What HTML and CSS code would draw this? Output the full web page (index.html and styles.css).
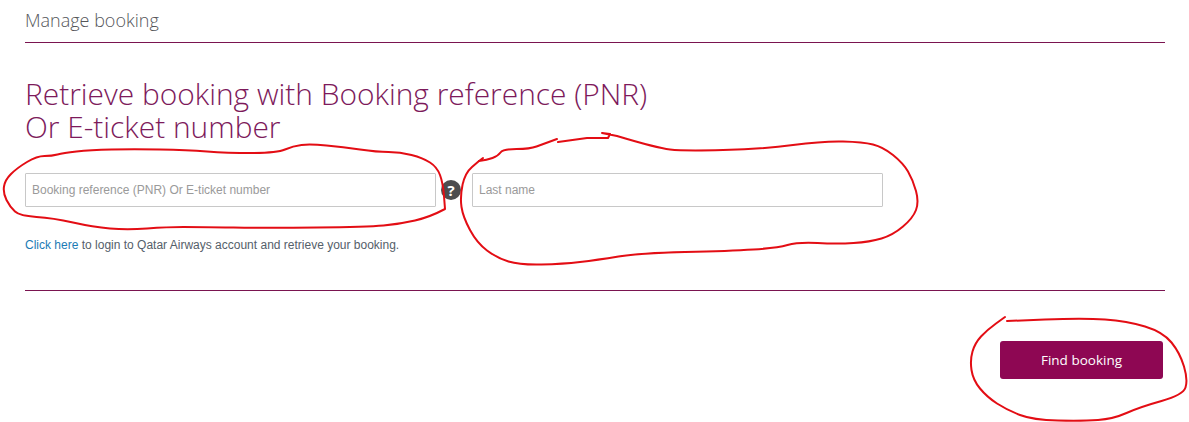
FILE: index.html
```html
<!DOCTYPE html>
<html lang="en">
<head>
<meta charset="utf-8">
<title>Manage booking</title>
<link rel="stylesheet" href="styles.css">
</head>
<body>
<main class="page">
  <header class="top">
    <h2 class="top-title">Manage booking</h2>
  </header>
  <h1 class="heading">Retrieve booking with Booking reference (PNR)<br>Or E-ticket number</h1>
  <form class="fields">
    <input class="field" type="text" placeholder="Booking reference (PNR) Or E-ticket number">
    <span class="help">?</span>
    <input class="field" type="text" placeholder="Last name">
  </form>
  <p class="login"><a class="link" href="#">Click here</a> to login to Qatar Airways account and retrieve your booking.</p>
  <div class="actions">
    <button class="find" type="button">Find booking</button>
  </div>
</main>
<svg class="marks" width="1189" height="422" viewBox="0 0 1189 422" aria-hidden="true">
  <path class="mark" d="M44.5 156Q52 156 57.5 154.5Q63 153 76.5 151.5Q90 150 111.5 149.5Q133 149 160 149.5Q187 150 207 151.5Q227 153 252 153Q277 153 285 149.5Q293 146 301.5 145Q310 144 326.5 145.5Q343 147 360 149.5Q377 152 388.5 152Q400 152 411.5 155Q423 158 430 162.5Q437 167 440 175Q443 183 444 196L445 209Q430 217 415 220.5Q400 224 383.5 225.5Q367 227 317 227.5Q267 228 233.5 227.5Q200 227 183.5 227Q167 227 147 228.5Q127 230 110 228.5Q93 227 73 222.5Q53 218 36.5 217Q20 216 15 211.5Q10 207 6.5 200Q3 193 4 186.5Q5 180 11 174Q17 168 27 162Q37 156 44.5 156Z"/>
  <path class="mark" d="M483 158L479 161Q487 160 492.5 158Q498 156 500.5 152.5Q503 149 516.5 149Q530 149 536.5 146.5L557 139"/>
  <path class="mark" d="M558 142L587 138L608 138L610 134L602 133L617 136Q657 148 670 149.5Q683 151 723 150Q763 149 793 145Q823 141 843 141.5Q863 142 873 144.5Q883 147 893 155Q903 163 908 171.5Q913 180 916 191Q919 202 916 210Q913 218 903 226.5Q893 235 881.5 238.5Q870 242 853.5 243Q837 244 817.5 243Q798 242 787.5 245Q777 248 753.5 249.5Q730 251 685 252Q640 253 618.5 256.5Q597 260 580 262Q563 264 541.5 264.5Q520 265 508.5 261.5Q497 258 487 250.5Q477 243 470 230Q463 217 461.5 207Q460 197 462.5 185Q465 173 472 167L479 161"/>
  <path class="mark" d="M1005 317L996 323.5Q987 330 981 336.5Q975 343 972.5 351.5Q970 360 971.5 370Q973 380 980 388.5Q987 397 997 403.5Q1007 410 1020 415Q1033 420 1058 420.5Q1083 421 1098 420Q1113 419 1126.5 413Q1140 407 1161.5 401Q1183 395 1185.5 387.5Q1188 380 1184 366.5Q1180 353 1171.5 342.5Q1163 332 1145 326.5Q1127 321 1105 319.5Q1083 318 1045 319.5L1007 321"/>
</svg>
</body>
</html>
```
FILE: styles.css
```css
* {
  box-sizing: border-box;
}

html,
body {
  margin: 0;
  background: #fff;
}

body {
  position: relative;
  width: 1189px;
  height: 422px;
  overflow: hidden;
}

.page {
  padding: 0 24px 0 25px;
}

.top {
  height: 43px;
  padding-top: 8px;
  border-bottom: 1px solid #7a1450;
}

.top-title {
  margin: 0;
  font: 300 18px/24px "Open Sans", sans-serif;
  color: #55565a;
}

.heading {
  margin: 34px 0 0;
  font: 300 29.9px/33px "Open Sans", sans-serif;
  color: #7d1a5b;
}

.fields {
  display: flex;
  align-items: center;
  margin-top: 30px;
}

.field {
  width: 411px;
  height: 34px;
  padding: 0 6px;
  border: 1px solid #c8c8c8;
  border-radius: 1px;
  background: #fff;
  font: 12px "Liberation Sans", Arial, sans-serif;
  color: #333;
}

.field::placeholder {
  color: #9a9a9a;
  opacity: 1;
}

.help {
  flex: none;
  width: 20px;
  height: 20px;
  margin: 0 11px 0 5px;
  border-radius: 50%;
  background: #4d4d4f;
  color: #fff;
  font: 700 15px/20px "Open Sans", sans-serif;
  text-align: center;
}

.login {
  margin: 31px 0 0;
  padding-bottom: 38px;
  border-bottom: 1px solid #7a1450;
  font: 12px/14px "Liberation Sans", Arial, sans-serif;
  color: #55606a;
}

.link {
  color: #1b7bb5;
  text-decoration: none;
}

.actions {
  display: flex;
  justify-content: flex-end;
  padding: 50px 2px 0 0;
}

.find {
  width: 163px;
  height: 38px;
  padding: 0;
  border: 0;
  border-radius: 3px;
  background: #8e0753;
  color: #fff;
  font: 400 13.5px/37px "Open Sans", sans-serif;
}

.marks {
  position: absolute;
  top: 0;
  left: 0;
  pointer-events: none;
}

.mark {
  fill: none;
  stroke: #e30d14;
  stroke-width: 2;
  stroke-linejoin: round;
  stroke-linecap: round;
}
```
